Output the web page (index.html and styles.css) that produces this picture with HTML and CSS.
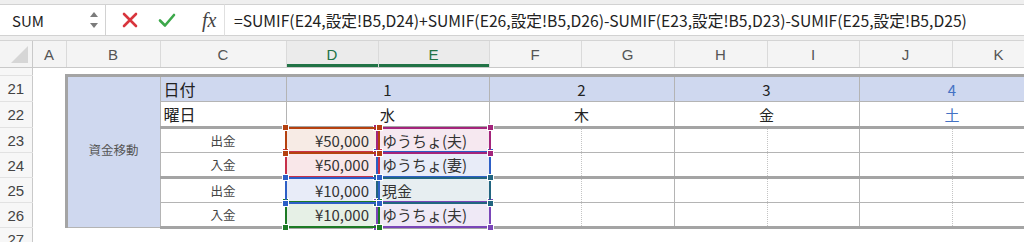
FILE: index.html
```html
<!DOCTYPE html>
<html lang="ja">
  <head>
    <meta charset="UTF-8" />
    <title>資金移動 - Excel</title>
    <link rel="stylesheet" href="styles.css">
  </head>
  <body>
    <div class="formula-bar">
      <div class="name-box">
        <span>SUM</span>
        <svg class="spinner" width="10" height="20" viewBox="0 0 10 20">
          <path d="M1 7 L5 2 L9 7 Z" fill="#7b7b7b" />
          <path d="M1 13 L5 18 L9 13 Z" fill="#7b7b7b" />
        </svg>
      </div>
      <div class="tools">
        <svg class="tool" width="16" height="16" viewBox="0 0 16 16">
          <path d="M2 2 L14 14 M14 2 L2 14" stroke="#d8353d" stroke-width="2.6" stroke-linecap="round" />
        </svg>
        <svg class="tool" width="18" height="16" viewBox="0 0 18 16">
          <path d="M2 8.5 L7 13.5 L16 3" fill="none" stroke="#3ca84a" stroke-width="2.6" stroke-linecap="round" stroke-linejoin="round" />
        </svg>
        <span class="fx">fx</span>
      </div>
      <div class="formula">=SUMIF(E24,設定!B5,D24)+SUMIF(E26,設定!B5,D26)-SUMIF(E23,設定!B5,D23)-SUMIF(E25,設定!B5,D25)</div>
    </div>

    <table class="sheet">
      <colgroup>
        <col style="width:32px"><col style="width:34px"><col style="width:94px"><col style="width:126px">
        <col style="width:92px"><col style="width:111px"><col style="width:92px"><col style="width:93px">
        <col style="width:93px"><col style="width:92px"><col style="width:93px"><col style="width:93px">
      </colgroup>
      <thead>
        <tr>
          <th class="corner"><span class="tri"></span></th>
          <th>A</th><th>B</th><th>C</th><th class="sel">D</th><th class="sel">E</th>
          <th>F</th><th>G</th><th>H</th><th>I</th><th>J</th><th>K</th>
        </tr>
      </thead>
      <tbody>
        <tr class="r20">
          <th class="rh"></th><td colspan="11"></td>
        </tr>
        <tr class="r21">
          <th class="rh">21</th>
          <td></td>
          <td class="group" rowspan="6"><span class="group-text">資金移動</span></td>
          <td class="label">日付</td>
          <td class="day" colspan="2">1</td>
          <td class="day" colspan="2">2</td>
          <td class="day" colspan="2">3</td>
          <td class="day sat" colspan="2">4</td>
        </tr>
        <tr class="r22">
          <th class="rh">22</th>
          <td></td>
          <td class="label">曜日</td>
          <td class="day" colspan="2">水</td>
          <td class="day" colspan="2">木</td>
          <td class="day" colspan="2">金</td>
          <td class="day sat" colspan="2">土</td>
        </tr>
        <tr class="r23 thin">
          <th class="rh">23</th>
          <td></td>
          <td class="kind">出金</td>
          <td class="amt fill-orange"><div class="ref orange z3"><i class="tl"></i><i class="tr"></i><i class="bl"></i><i class="br"></i></div>¥50,000</td>
          <td class="acct fill-magenta"><div class="ref magenta z2"><i class="tl"></i><i class="tr"></i><i class="bl"></i><i class="br"></i></div>ゆうちょ(夫)</td>
          <td class="dot"></td><td></td><td class="dot"></td><td></td><td class="dot"></td><td></td>
        </tr>
        <tr class="r24 thick">
          <th class="rh">24</th>
          <td></td>
          <td class="kind">入金</td>
          <td class="amt fill-crimson"><div class="ref crimson z1"><i class="tl"></i><i class="tr"></i><i class="bl"></i><i class="br"></i></div>¥50,000</td>
          <td class="acct fill-blue"><div class="ref blue z0"><i class="tl"></i><i class="tr"></i><i class="bl"></i><i class="br"></i></div>ゆうちょ(妻)</td>
          <td class="dot"></td><td></td><td class="dot"></td><td></td><td class="dot"></td><td></td>
        </tr>
        <tr class="r25 thin">
          <th class="rh">25</th>
          <td></td>
          <td class="kind">出金</td>
          <td class="amt fill-blue"><div class="ref blue z3"><i class="tl"></i><i class="tr"></i><i class="bl"></i><i class="br"></i></div>¥10,000</td>
          <td class="acct fill-teal"><div class="ref teal z2"><i class="tl"></i><i class="tr"></i><i class="bl"></i><i class="br"></i></div>現金</td>
          <td class="dot"></td><td></td><td class="dot"></td><td></td><td class="dot"></td><td></td>
        </tr>
        <tr class="r26 thick">
          <th class="rh">26</th>
          <td></td>
          <td class="kind">入金</td>
          <td class="amt fill-green"><div class="ref green z2"><i class="tl"></i><i class="tr"></i><i class="bl"></i><i class="br"></i></div>¥10,000</td>
          <td class="acct fill-purple"><div class="ref purple z1"><i class="tl"></i><i class="tr"></i><i class="bl"></i><i class="br"></i></div>ゆうちょ(夫)</td>
          <td class="dot"></td><td></td><td class="dot"></td><td></td><td class="dot"></td><td></td>
        </tr>
        <tr class="r27">
          <th class="rh">27</th><td colspan="11"></td>
        </tr>
      </tbody>
    </table>
  </body>
</html>
```

FILE: styles.css
```css
body {
  margin: 0;
  width: 1024px;
  height: 242px;
  overflow: hidden;
  background: #fff;
  color: #222;
  font-family: "Noto Sans CJK JP", "Noto Sans", sans-serif;
}

/* formula bar */
.formula-bar {
  display: flex;
  height: 41px;
  box-sizing: border-box;
  padding: 4px 0 4px;
  background: #efefef;
  border-bottom: 1px solid #d4d4d4;
}
.name-box {
  width: 106px;
  box-sizing: border-box;
  display: flex;
  align-items: center;
  justify-content: space-between;
  padding: 0 6px 0 12px;
  background: #fff;
  border: 1px solid #d2d2d2;
  border-left: 0;
  font-size: 15px;
}
.tools {
  width: 118px;
  box-sizing: border-box;
  display: flex;
  align-items: center;
  gap: 20px;
  padding-left: 16px;
  background: #fff;
  border-top: 1px solid #d2d2d2;
  border-bottom: 1px solid #d2d2d2;
}
.fx {
  font-family: "Liberation Serif", serif;
  font-style: italic;
  font-size: 20px;
  color: #444;
  padding-left: 6px;
}
.formula {
  flex: 1;
  display: flex;
  align-items: center;
  padding-left: 9px;
  background: #fff;
  border: 1px solid #d2d2d2;
  border-left: 1px solid #e0e0e0;
  border-right: 0;
  font-size: 15.7px;
  white-space: nowrap;
  overflow: hidden;
}

/* grid */
.sheet {
  table-layout: fixed;
  border-collapse: collapse;
  width: 1045px;
}
.sheet thead th {
  height: 26px;
  padding: 0;
  background: #f4f4f4;
  border-right: 1px solid #dadada;
  border-bottom: 1px solid #c9c9c9;
  font-weight: normal;
  font-family: "Liberation Sans", "Noto Sans", sans-serif;
  font-size: 15px;
  color: #555;
}
.sheet thead th.sel {
  background: #ebebeb;
  color: #217346;
  box-shadow: inset 0 -3px 0 #217346;
}
.corner {
  position: relative;
  border-right-color: #c9c9c9 !important;
}
.tri {
  position: absolute;
  right: 4px;
  bottom: 4px;
  width: 0;
  height: 0;
  border-left: 17px solid transparent;
  border-bottom: 17px solid #d6d6d6;
}
.sheet td {
  padding: 0;
  font-size: 15px;
  white-space: nowrap;
}
.rh {
  padding: 0;
  background: #f7f7f7;
  border-right: 1px solid #c9c9c9;
  border-bottom: 1px solid #e2e2e2;
  font-weight: normal;
  font-family: "Liberation Sans", "Noto Sans", sans-serif;
  font-size: 15px;
  color: #444;
}
.r20 { height: 8px; }
.r21, .r22, .r23, .r24, .r25, .r26 { height: 25px; }
.r27 { height: 25px; }
.r27 .rh { vertical-align: top; padding-top: 3px; }

.r21 td:not(:first-of-type) {
  border-top: 3px solid #a4a4a4;
  background: #cfd8ef;
}
.r21 td.group { background: #cfd8ef; }
.r21 td, .r22 td { border-bottom: 1px solid #b4b4b4; }
.r22 td:not(:first-of-type) { border-bottom: 3px solid #a4a4a4; }
.thin td:not(:first-of-type) { border-bottom: 1px solid #b4b4b4; }
.thick td:not(:first-of-type) { border-bottom: 3px solid #a4a4a4; }
.r21 td:first-of-type, .r22 td:first-of-type,
.r23 td:first-of-type, .r24 td:first-of-type,
.r25 td:first-of-type, .r26 td:first-of-type {
  border: 0;
  border-right: 3px solid #a4a4a4;
  background: #fff;
}

.group {
  background: #cfd8ef;
  border-right: 1px solid #b4b4b4;
  border-bottom: 3px solid #a4a4a4;
  text-align: center;
  font-size: 12.5px !important;
  color: #555;
}
.group-text {
  position: relative;
  top: -3px;
}
.label {
  padding-left: 3px !important;
  border-right: 1px solid #b4b4b4;
  font-size: 16px !important;
}
.day {
  text-align: center;
  border-right: 1px solid #b4b4b4;
}
.sat { color: #4472c4; }
.kind {
  text-align: center;
  font-size: 12.5px !important;
  color: #444;
  border-right: 1px solid #b4b4b4;
}
.amt {
  position: relative;
  text-align: right;
  padding-right: 9px !important;
  color: #333;
}
.acct {
  position: relative;
  padding-left: 4px !important;
  color: #333;
  border-right: 1px solid #b4b4b4;
}
.dot { border-right: 1px dotted #c4c4c4; }
.acct + td + .dot, .dot + td { border-right: 1px solid #b4b4b4; }

/* formula reference highlights */
.fill-orange { background: #f7ebe5; }
.fill-magenta { background: #f6e8f0; }
.fill-crimson { background: #f9e7e9; }
.fill-blue { background: #e8ecf8; }
.fill-teal { background: #e7eef1; }
.fill-green { background: #e6f0e6; }
.fill-purple { background: #efe9f6; }

.ref {
  position: absolute;
  top: -2px;
  left: -2px;
  right: -2px;
  bottom: -2px;
  border: 2px solid;
  pointer-events: none;
}
.ref i {
  position: absolute;
  width: 5px;
  height: 5px;
  background: currentColor;
  outline: 1px solid #fff;
}
.ref .tl { top: -4px; left: -4px; }
.ref .tr { top: -4px; right: -4px; }
.ref .bl { bottom: -4px; left: -4px; }
.ref .br { bottom: -4px; right: -4px; }
.orange { color: #b5410f; }
.magenta { color: #a3247b; }
.crimson { color: #c7314a; }
.blue { color: #2d5fc6; }
.teal { color: #226580; }
.green { color: #1d7a25; }
.purple { color: #7a46b8; }
.z0 { z-index: 1; }
.z1 { z-index: 2; }
.z2 { z-index: 3; }
.z3 { z-index: 4; }
```
